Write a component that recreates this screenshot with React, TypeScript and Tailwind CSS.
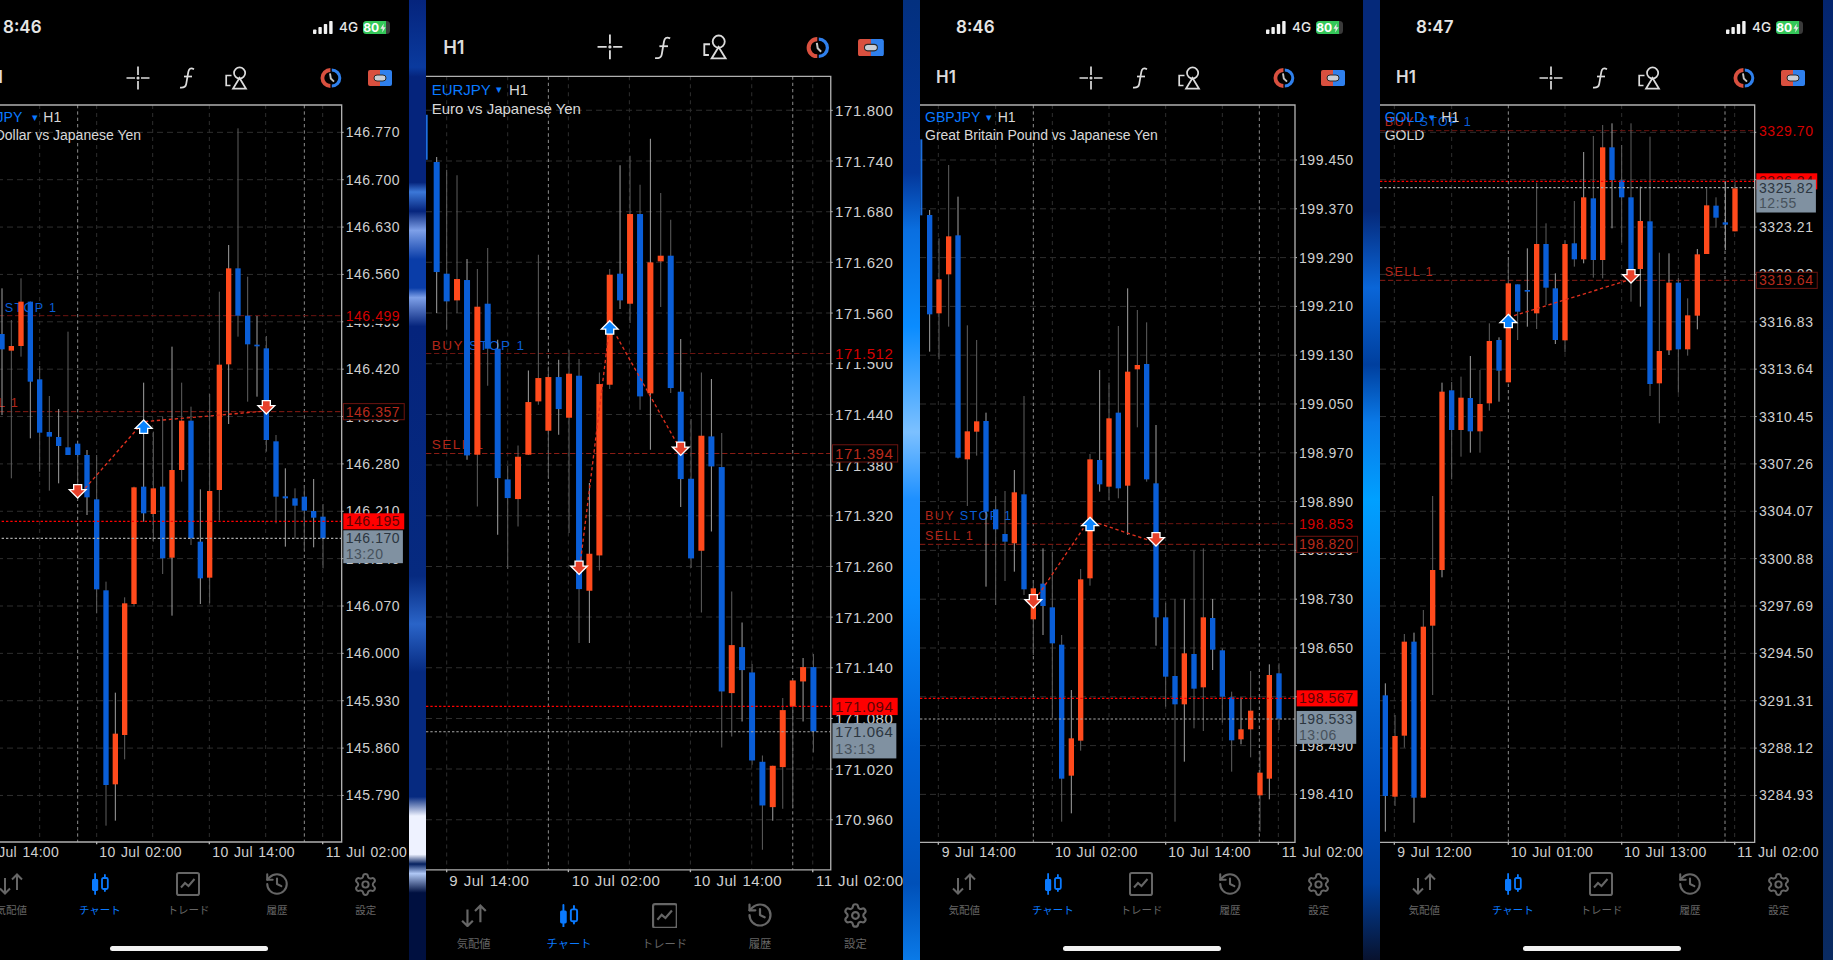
import { History, Settings } from "lucide-react"

// c = [x, wickTop, bodyTop, bodyBottom, wickBottom, colour], in units of 1/3 screen pixel
type Candle = [number, number, number, number, number, "b" | "o"]

type ChartData = {
  viewBox: string
  width: string
  font: number
  bodyWidth: number
  frame: { left: number; top: number; right: number; bottom: number }
  labelX: number
  prices: [string, number][]
  dim: number[]
  bright: number[]
  ticks: number[]
  times: [string, number][]
  timeY: number
  symbol: { x: number; y: number; name: string; arrowX: number; h1X: number; desc: string; descX: number; descY: number }
  buy: { price: string; y: number }
  sell: { price: string; y: number }
  ask: { price: string; y: number }
  bid: { price: string; time: string; y: number }
  orderLabels: { text: string; x: number; y: number; red?: string; blue?: string }[]
  path: string[]
  arrows: [number, number, "up" | "down"][]
  edge?: [number, number, number]
  candles: Candle[]
}

const ladder = (labels: string[], y0: number, step: number): [string, number][] =>
  labels.map((l, i) => [l, y0 + i * step])

const usdjpy: ChartData = {
  viewBox: "-99 -414 1329 2292",
  width: "w-[443px]",
  font: 42,
  bodyWidth: 16,
  frame: { left: -99, top: -405, right: 1025, bottom: 1806 },
  labelX: 1037,
  prices: ladder(
    ["146.770", "146.700", "146.630", "146.560", "146.490", "146.420", "146.350", "146.280", "146.210", "146.140", "146.070", "146.000", "145.930", "145.860", "145.790"],
    -323,
    142.1,
  ),
  dim: [119, 290, 458, 628, 797, 968],
  bright: [233, 913],
  ticks: [-50, 290, 628, 968],
  times: [["9 Jul 14:00", -46], ["10 Jul 02:00", 298], ["10 Jul 14:00", 637], ["11 Jul 02:00", 977]],
  timeY: 1837,
  symbol: { x: -99, y: -368, name: "USDJPY", arrowX: 105, h1X: 130, desc: "US Dollar vs Japanese Yen", descX: -86, descY: -315 },
  buy: { price: "146.499", y: 227 },
  sell: { price: "146.357", y: 515 },
  ask: { price: "146.195", y: 844 },
  bid: { price: "146.170", time: "13:20", y: 895 },
  orderLabels: [
    { text: "", x: -90, y: 203, red: "BUY ", blue: "STOP 1" },
    { text: "", x: -90, y: 490, red: "SELL 1" },
  ],
  path: ["255,745 431,545 799,513"],
  arrows: [[233, 752, "down"], [431, 562, "up"], [799, 500, "down"]],
  candles: [
    [6, 145, 282, 328, 525, "b"], [34, 240, 318, 332, 715, "o"], [63, 115, 185, 318, 350, "o"], [91, 185, 185, 425, 595, "b"],
    [119, 378, 418, 578, 695, "b"], [148, 468, 576, 590, 752, "b"], [176, 507, 591, 618, 730, "b"], [204, 275, 622, 645, 645, "b"],
    [233, 610, 611, 645, 780, "b"], [261, 630, 645, 772, 825, "b"], [290, 645, 778, 1048, 1120, "b"], [318, 1025, 1051, 1635, 1757, "b"],
    [346, 1358, 1481, 1633, 1742, "o"], [374, 1072, 1090, 1485, 1558, "o"], [402, 740, 742, 1092, 1100, "o"], [431, 428, 740, 820, 845, "b"],
    [460, 575, 745, 822, 905, "o"], [488, 530, 740, 955, 1002, "b"], [516, 320, 690, 953, 1127, "o"], [545, 428, 542, 690, 725, "o"],
    [573, 500, 542, 895, 915, "b"], [601, 748, 905, 1015, 1092, "b"], [629, 462, 753, 1013, 1090, "o"], [658, 155, 374, 750, 842, "o"],
    [686, 15, 85, 373, 552, "o"], [714, -335, 85, 227, 290, "b"], [743, 110, 227, 313, 485, "b"], [771, 228, 314, 318, 470, "b"],
    [799, 288, 325, 600, 635, "b"], [828, 585, 604, 770, 850, "b"], [856, 685, 769, 775, 920, "b"], [885, 745, 775, 797, 895, "b"],
    [913, 735, 770, 812, 930, "b"], [941, 717, 813, 833, 922, "b"], [969, 792, 830, 895, 985, "b"],
  ],
}

const eurjpy: ChartData = {
  viewBox: "18 -680 1431 2468",
  width: "w-[443px]",
  font: 45,
  bodyWidth: 18,
  frame: { left: 18, top: -670, right: 1232, bottom: 1710 },
  labelX: 1245,
  prices: ladder(
    ["171.800", "171.740", "171.680", "171.620", "171.560", "171.500", "171.440", "171.380", "171.320", "171.260", "171.200", "171.140", "171.080", "171.020", "170.960"],
    -568,
    152,
  ),
  dim: [80, 263, 445, 628, 811, 995, 1178],
  bright: [385, 1118],
  ticks: [80, 445, 811, 1178],
  times: [["9 Jul 14:00", 88], ["10 Jul 02:00", 455], ["10 Jul 14:00", 820], ["11 Jul 02:00", 1188]],
  timeY: 1742,
  symbol: { x: 35, y: -632, name: "EURJPY", arrowX: 237, h1X: 267, desc: "Euro vs Japanese Yen", descX: 35, descY: -574 },
  buy: { price: "171.512", y: 161 },
  sell: { price: "171.394", y: 461 },
  ask: { price: "171.094", y: 1220 },
  bid: { price: "171.064", time: "13:13", y: 1296 },
  orderLabels: [
    { text: "", x: 35, y: 135, red: "BUY ", blue: "STOP 1" },
    { text: "", x: 35, y: 433, red: "SELL 1" },
  ],
  path: ["482,780 565,110", "590,110 770,430"],
  arrows: [[477, 802, "down"], [569, 85, "up"], [782, 445, "down"]],
  edge: [20, -555, -420],
  candles: [
    [50, -428, -413, -83, 40, "b"], [80, -390, -78, 5, 90, "b"], [111, -373, -62, 2, 40, "o"], [141, -122, -59, 467, 480, "b"],
    [172, -92, 21, 465, 620, "o"], [203, -155, 12, 147, 258, "b"], [233, 120, 147, 535, 705, "b"], [263, 498, 539, 595, 808, "b"],
    [294, 437, 471, 598, 680, "o"], [325, 212, 307, 465, 465, "o"], [355, -135, 235, 305, 315, "o"], [385, 200, 232, 393, 533, "o"],
    [416, 180, 232, 328, 405, "b"], [447, 150, 222, 354, 700, "o"], [477, 178, 228, 868, 1030, "b"], [508, 550, 762, 873, 1030, "o"],
    [538, 218, 253, 767, 812, "o"], [569, -92, -75, 255, 268, "o"], [600, -403, -78, 2, 28, "b"], [630, -432, -257, 12, 70, "o"],
    [660, -345, -257, 290, 330, "b"], [691, -483, -112, 281, 450, "o"], [722, -320, -132, -115, 22, "o"], [752, -240, -132, 265, 280, "b"],
    [782, 118, 276, 538, 622, "b"], [813, 358, 537, 776, 805, "b"], [844, 218, 408, 753, 938, "o"], [874, 238, 410, 500, 695, "b"],
    [905, 400, 502, 1175, 1343, "b"], [935, 875, 1036, 1180, 1310, "o"], [966, 968, 1042, 1111, 1265, "b"], [996, 1093, 1118, 1382, 1395, "b"],
    [1027, 1367, 1386, 1517, 1650, "b"], [1058, 1398, 1398, 1522, 1563, "o"], [1088, 1195, 1231, 1402, 1527, "o"], [1118, 1142, 1142, 1220, 1525, "o"],
    [1149, 1075, 1102, 1145, 1265, "o"], [1180, 1063, 1102, 1295, 1358, "b"],
  ],
}

const gbpjpy: ChartData = {
  viewBox: "60 -1194 1329 2292",
  width: "w-[443px]",
  font: 42,
  bodyWidth: 16,
  frame: { left: 60, top: -1185, right: 1185, bottom: 1027 },
  labelX: 1197,
  prices: ladder(
    ["199.450", "199.370", "199.290", "199.210", "199.130", "199.050", "198.970", "198.890", "198.810", "198.730", "198.650", "198.570", "198.490", "198.410"],
    -1020,
    146.4,
  ),
  dim: [115, 287, 457, 627, 797, 967, 1135],
  bright: [400, 1078],
  ticks: [115, 457, 797, 1135],
  times: [["9 Jul 14:00", 125], ["10 Jul 02:00", 465], ["10 Jul 14:00", 805], ["11 Jul 02:00", 1145]],
  timeY: 1057,
  symbol: { x: 75, y: -1148, name: "GBPJPY", arrowX: 267, h1X: 293, desc: "Great Britain Pound vs Japanese Yen", descX: 75, descY: -1096 },
  buy: { price: "198.853", y: 71 },
  sell: { price: "198.820", y: 133 },
  ask: { price: "198.567", y: 595 },
  bid: { price: "198.533", time: "13:06", y: 657 },
  orderLabels: [
    { text: "", x: 75, y: 47, red: "BUY ", blue: "STOP 1" },
    { text: "", x: 75, y: 107, red: "SELL 1" },
  ],
  path: ["415,285 550,85", "595,70 750,122"],
  arrows: [[400, 302, "down"], [570, 74, "up"], [768, 116, "down"]],
  edge: [64, -1082, -854],
  candles: [
    [89, -870, -855, -557, -445, "b"], [117, -785, -662, -560, -422, "o"], [146, -1005, -791, -677, -520, "o"], [174, -910, -794, -127, -125, "b"],
    [202, -524, -206, -122, 18, "o"], [230, -480, -236, -205, -133, "o"], [258, -262, -237, 35, 260, "b"], [287, -12, 28, 88, 315, "b"],
    [315, -27, 102, 125, 243, "b"], [343, -90, -23, 130, 215, "o"], [372, -312, -17, 268, 285, "b"], [400, 240, 265, 358, 465, "o"],
    [429, 145, 251, 318, 405, "b"], [457, 155, 322, 430, 655, "b"], [485, 405, 434, 836, 965, "b"], [514, 570, 715, 827, 940, "o"],
    [542, 207, 238, 722, 752, "o"], [570, -138, -122, 235, 257, "o"], [599, -390, -120, -47, -25, "b"], [627, -352, -245, -40, 0, "o"],
    [655, -522, -262, -35, -5, "b"], [683, -635, -385, -43, 105, "o"], [712, -570, -405, -392, -218, "o"], [740, -533, -408, -62, -55, "b"],
    [768, -225, -50, 352, 437, "b"], [797, 308, 352, 530, 620, "b"], [825, 298, 528, 613, 965, "b"], [853, 298, 460, 613, 785, "o"],
    [882, 152, 462, 566, 685, "b"], [910, 145, 352, 562, 693, "o"], [938, 297, 354, 449, 510, "b"], [967, 445, 451, 590, 668, "b"],
    [995, 575, 592, 721, 815, "b"], [1023, 592, 688, 718, 733, "o"], [1052, 513, 632, 688, 772, "o"], [1080, 752, 818, 886, 995, "o"],
    [1108, 493, 525, 836, 898, "o"], [1137, 490, 520, 656, 690, "b"],
  ],
}

const gold: ChartData = {
  viewBox: "30 -1134 1329 2292",
  width: "w-[443px]",
  font: 42,
  bodyWidth: 16,
  frame: { left: 30, top: -1125, right: 1154, bottom: 1087 },
  labelX: 1167,
  prices: ladder(
    ["3329.59", "3326.40", "3323.21", "3320.02", "3316.83", "3313.64", "3310.45", "3307.26", "3304.07", "3300.88", "3297.69", "3294.50", "3291.31", "3288.12", "3284.93"],
    -1043,
    142.1,
  ),
  dim: [73, 245, 585, 755, 925, 1094],
  bright: [415, 1065],
  ticks: [73, 415, 755, 1094],
  times: [["9 Jul 12:00", 82], ["10 Jul 01:00", 422], ["10 Jul 13:00", 762], ["11 Jul 02:00", 1102]],
  timeY: 1117,
  symbol: { x: 44, y: -1090, name: "GOLD", arrowX: 186, h1X: 214, desc: "GOLD", descX: 44, descY: -1036 },
  buy: { price: "3329.70", y: -1048 },
  sell: { price: "3319.64", y: -599 },
  ask: { price: "3326.24", y: -896 },
  bid: { price: "3325.82", time: "12:55", y: -877 },
  orderLabels: [
    { text: "", x: 44, y: -1073, red: "BUY ", blue: "STOP 1" },
    { text: "", x: 44, y: -625, red: "SELL 1" },
  ],
  path: ["432,-493 770,-598"],
  arrows: [[415, -475, "up"], [783, -613, "down"]],
  candles: [
    [46, 610, 646, 948, 1055, "b"], [75, 705, 768, 950, 978, "o"], [103, 462, 485, 767, 803, "o"], [132, 458, 485, 953, 1028, "b"],
    [160, 390, 440, 953, 953, "o"], [188, 48, 270, 437, 645, "o"], [216, -292, -265, 270, 292, "o"], [245, -294, -269, -150, -2, "b"],
    [273, -310, -247, -150, -70, "o"], [301, -372, -246, -146, -82, "b"], [330, -330, -228, -146, -82, "o"], [358, -470, -417, -230, -208, "o"],
    [387, -428, -420, -328, -235, "b"], [415, -660, -590, -293, -293, "o"], [443, -587, -587, -505, -420, "b"], [472, -695, -570, -568, -460, "b"],
    [500, -892, -708, -500, -453, "o"], [528, -770, -708, -577, -525, "b"], [556, -620, -575, -420, -408, "b"], [585, -720, -708, -419, -383, "o"],
    [613, -837, -710, -662, -640, "b"], [641, -984, -848, -662, -650, "o"], [670, -1032, -845, -660, -607, "b"], [698, -1065, -998, -660, -605, "o"],
    [726, -1070, -998, -900, -755, "b"], [755, -1005, -899, -848, -712, "b"], [783, -1070, -848, -630, -535, "b"], [811, -880, -777, -633, -520, "o"],
    [840, -1030, -776, -288, -252, "b"], [868, -682, -387, -290, -170, "o"], [897, -680, -592, -389, -375, "o"], [925, -607, -592, -392, -262, "b"],
    [953, -545, -494, -392, -373, "o"], [982, -693, -677, -493, -452, "o"], [1010, -875, -824, -678, -678, "o"], [1038, -848, -823, -787, -757, "b"],
    [1066, -895, -773, -766, -690, "b"], [1095, -895, -875, -746, -746, "o"],
  ],
}

function Chart({ d }: { d: ChartData }) {
  const { frame, font, labelX } = d
  const spacing = font * 0.04
  const boxX = frame.right + 5
  const boxW = font * 4.35
  const boxH = font * 1.15
  return (
    <svg viewBox={d.viewBox} className="block h-[764px] w-[443px] font-['Liberation_Sans',sans-serif]">
      {d.prices.map(([, y]) => (
        <line key={y} x1={frame.left} x2={frame.right} y1={y} y2={y} stroke="#2e2e2e" strokeWidth="3" strokeDasharray="18 12" />
      ))}
      {d.dim.map((x) => (
        <line key={x} x1={x} x2={x} y1={frame.top} y2={frame.bottom} stroke="#2e2e2e" strokeWidth="3" strokeDasharray="12 12" />
      ))}
      {d.bright.map((x) => (
        <line key={x} x1={x} x2={x} y1={frame.top} y2={frame.bottom} stroke="#8c8c8c" strokeWidth="3" strokeDasharray="10 9" />
      ))}

      {/* order labels sit under the candles */}
      {d.orderLabels.map((o) => (
        <text key={o.y} x={o.x} y={o.y} fontSize={font * 0.9} letterSpacing={font * 0.1} dominantBaseline="central">
          {o.red && <tspan fill="#b3261a">{o.red}</tspan>}
          {o.blue && <tspan fill="#0a5ed7">{o.blue}</tspan>}
        </text>
      ))}
      <text x={d.symbol.x} y={d.symbol.y} fontSize={font} fill="#0a7aff" dominantBaseline="central">{d.symbol.name}</text>
      <text x={d.symbol.arrowX} y={d.symbol.y} fontSize={font * 0.75} fill="#0a7aff" textAnchor="middle" dominantBaseline="central">▾</text>
      <text x={d.symbol.h1X} y={d.symbol.y} fontSize={font} fill="#d8d8d8" dominantBaseline="central">H1</text>
      <text x={d.symbol.descX} y={d.symbol.descY} fontSize={font} fill="#d8d8d8" dominantBaseline="central">{d.symbol.desc}</text>

      <line x1={frame.left} x2={frame.right} y1={d.buy.y} y2={d.buy.y} stroke="#6b1410" strokeWidth="3" strokeDasharray="16 8" />
      <line x1={frame.left} x2={frame.right} y1={d.sell.y} y2={d.sell.y} stroke="#8a1c14" strokeWidth="3" strokeDasharray="16 8" />

      {d.edge && <line x1={d.edge[0]} x2={d.edge[0]} y1={d.edge[1]} y2={d.edge[2]} stroke="#1d6fe0" strokeWidth="6" />}
      {d.candles.map(([x, wt, bt, bb, wb, c], i) => (
        <g key={x}>
          <line x1={x} x2={x} y1={wt} y2={wb} stroke={i % 3 === 0 ? "#a0a0a0" : "#5f5f5f"} strokeWidth="3" />
          <rect x={x - d.bodyWidth / 2} y={bt} width={d.bodyWidth} height={Math.max(bb - bt, 5)} fill={c === "b" ? "#0a5ed7" : "#ff4a1c"} />
        </g>
      ))}

      {d.path.map((p) => (
        <polyline key={p} points={p} fill="none" stroke="#e0301e" strokeWidth="4" strokeDasharray="10 8" />
      ))}
      {d.arrows.map(([x, y, dir]) => (
        <polygon
          key={x}
          transform={`translate(${x} ${y}) ${dir === "down" ? "scale(1 -1)" : ""}`}
          points="0,-22 25,3 12,3 12,18 -12,18 -12,3 -25,3"
          fill={dir === "up" ? "#0a84ff" : "#e8402a"}
          stroke="#ffffff"
          strokeWidth="4"
        />
      ))}

      <line x1={frame.left} x2={frame.right} y1={d.ask.y} y2={d.ask.y} stroke="#ff0000" strokeWidth="3.5" strokeDasharray="7 6" />
      <line x1={frame.left} x2={frame.right} y1={d.bid.y} y2={d.bid.y} stroke="#a8a8a8" strokeWidth="3.5" strokeDasharray="7 6" />

      <path
        d={`M${frame.left} ${frame.top}H${frame.right}V${frame.bottom}H${frame.left}`}
        fill="none"
        stroke="#b0b0b0"
        strokeWidth="4"
      />
      {d.prices.map(([, y]) => (
        <line key={y} x1={frame.right} x2={frame.right + 6} y1={y} y2={y} stroke="#b0b0b0" strokeWidth="3" />
      ))}
      {d.ticks.map((x) => (
        <line key={x} x1={x} x2={x} y1={frame.bottom} y2={frame.bottom + 7} stroke="#b0b0b0" strokeWidth="4" />
      ))}

      {d.prices.map(([l, y]) => (
        <text key={l} x={labelX} y={y} fontSize={font} letterSpacing={spacing} fill="#cfcfcf" dominantBaseline="central">{l}</text>
      ))}
      {d.times.map(([l, x]) => (
        <text key={l} x={x} y={d.timeY} fontSize={font} letterSpacing={spacing * 0.6} wordSpacing={font * 0.08} fill="#cfcfcf" dominantBaseline="central">{l}</text>
      ))}

      <rect x={boxX} y={d.buy.y - boxH / 2} width={boxW} height={boxH} fill="#000" />
      <text x={labelX} y={d.buy.y} fontSize={font} letterSpacing={spacing} fill="#d40000" dominantBaseline="central">{d.buy.price}</text>

      <rect x={boxX} y={d.sell.y - boxH / 2} width={boxW} height={boxH} fill="#000" stroke="#6b1410" strokeWidth="3" />
      <text x={labelX} y={d.sell.y} fontSize={font} letterSpacing={spacing} fill="#b82a1c" dominantBaseline="central">{d.sell.price}</text>

      <rect x={boxX} y={d.ask.y - boxH / 2} width={boxW} height={boxH} fill="#ff0000" />
      <text x={labelX} y={d.ask.y} fontSize={font} letterSpacing={spacing} fill="#5a0505" dominantBaseline="central">{d.ask.price}</text>

      <rect x={boxX} y={d.bid.y - boxH / 2} width={boxW - 4} height={font * 2.35} fill="#8091a1" />
      <text x={labelX} y={d.bid.y} fontSize={font} letterSpacing={spacing} fill="#2c3640" dominantBaseline="central">{d.bid.price}</text>
      <text x={labelX} y={d.bid.y + font * 1.12} fontSize={font} letterSpacing={spacing} fill="#47525c" dominantBaseline="central">{d.bid.time}</text>
    </svg>
  )
}

function StatusBar({ time }: { time: string }) {
  return (
    <div className="flex h-[54px] items-center pt-[1px] pr-[20px] pl-[36px] text-[#e6e6e6]">
      <span className="font-['Inter',sans-serif] text-[17px] font-semibold">{time}</span>
      <div className="ml-auto flex items-center">
        <svg viewBox="0 0 20 13" className="h-[13px] w-[20px]" fill="#f2f2f2">
          <rect x="0" y="8.5" width="3.4" height="4.5" rx="0.8" />
          <rect x="5.4" y="6" width="3.4" height="7" rx="0.8" />
          <rect x="10.8" y="3" width="3.4" height="10" rx="0.8" />
          <rect x="16.2" y="0" width="3.4" height="13" rx="0.8" />
        </svg>
        <span className="ml-[6px] font-['Inter',sans-serif] text-[13.5px] leading-none font-medium">4G</span>
        <div className="ml-[5px] flex h-[13px] w-[27px] items-center overflow-hidden rounded-[3.5px] bg-[#3a3a3a]">
          <div className="flex h-full w-[23px] items-center justify-center bg-[#34c759] font-['Inter',sans-serif] text-[12px] leading-none font-bold text-white">
            80
            <svg viewBox="0 0 8 12" className="ml-[0.5px] h-[10px] w-[6px]" fill="#e6e6e6">
              <path d="M5 0 0.5 7H3.5L3 12 7.5 5H4.5Z" />
            </svg>
          </div>
        </div>
      </div>
    </div>
  )
}

function Toolbar() {
  return (
    <div className="flex h-[48px] items-center pl-[16px] text-[#dcdcdc]">
      <span className="w-[130.5px] font-['Inter',sans-serif] text-[17px] font-semibold">H1</span>
      <div className="flex w-[49px] justify-center">
        <svg viewBox="0 0 24 24" className="h-[24px] w-[24px]" fill="none" stroke="#dcdcdc" strokeWidth="1.7">
          <path d="M0.5 12H9M15 12H23.5M12 0.5V9M12 15V23.5" />
          <circle cx="12" cy="12" r="0.7" fill="#dcdcdc" />
        </svg>
      </div>
      <div className="flex w-[49px] justify-center">
        <svg viewBox="0 0 16 22" className="h-[22px] w-[16px]" fill="none" stroke="#dcdcdc" strokeWidth="1.7">
          <path d="M15 2.2C11.5 0.4 9.8 2 9.3 5L7.2 17C6.7 20 5 21 1 20.6" />
          <path d="M5 9.5H13" />
        </svg>
      </div>
      <div className="flex w-[49px] justify-center">
        <svg viewBox="0 0 23 24" className="h-[24px] w-[23px]" fill="none" stroke="#dcdcdc" strokeWidth="1.7">
          <circle cx="14.6" cy="7" r="5.6" />
          <path d="M14.5 12L8 22.7H21Z" />
          <path d="M6.5 9.5H1.2V19.5H5.5" />
        </svg>
      </div>
      <div className="w-[46px]" />
      <div className="flex w-[49px] justify-center">
        <svg viewBox="0 0 24 20" className="h-[20px] w-[24px]" fill="none">
          <path d="M11.4 2A8 8 0 0 0 11.4 18" stroke="#d9503f" strokeWidth="3.8" />
          <path d="M12.8 2A8 8 0 0 1 12.8 18" stroke="#2f80ed" strokeWidth="3" />
          <path d="M11 5.4L11.8 10.5L15 13.6" stroke="#c4c4c4" strokeWidth="1.9" />
        </svg>
      </div>
      <div className="flex w-[49px] justify-center">
        <svg viewBox="0 0 24 16" className="h-[16px] w-[24px]">
          <path d="M2 0H12V16H2A2 2 0 0 1 0 14V2A2 2 0 0 1 2 0Z" fill="#d9503f" />
          <path d="M12 0H22A2 2 0 0 1 24 2V14A2 2 0 0 1 22 16H12Z" fill="#2f80ed" />
          <rect x="6" y="5" width="12" height="6" rx="3" fill="#c9ced6" stroke="#2a2a2a" strokeWidth="1" />
        </svg>
      </div>
    </div>
  )
}

function TabItem({ label, active, children }: { label: string; active?: boolean; children: React.ReactNode }) {
  return (
    <div className={active ? "flex flex-col items-center text-[#0a7aff]" : "flex flex-col items-center text-[#666666]"}>
      <div className="flex h-[26px] items-center justify-center">{children}</div>
      <span className="mt-[6px] font-['Noto_Sans_CJK_JP',sans-serif] text-[10.5px] leading-[14px]">{label}</span>
    </div>
  )
}

function TabBar() {
  return (
    <div className="grid grid-cols-5 pt-[5px]">
      <TabItem label="気配値">
        <svg viewBox="0 0 24 22" className="h-[22px] w-[24px]" fill="none" stroke="currentColor" strokeWidth="2">
          <path d="M6 5V20.5M1 15.5L6 20.5L11 15.5" />
          <path d="M18 1.5V17M13 6.5L18 1.5L23 6.5" />
        </svg>
      </TabItem>
      <TabItem label="チャート" active>
        <svg viewBox="0 0 18 22" className="h-[22px] w-[18px]" fill="currentColor">
          <rect x="3.2" y="0" width="1.8" height="22" rx="0.9" />
          <rect x="1" y="6" width="6.2" height="12" rx="1.4" />
          <rect x="13" y="1" width="1.8" height="18" rx="0.9" />
          <rect x="11" y="5" width="5.8" height="11" rx="1.4" fill="#000" stroke="currentColor" strokeWidth="1.8" />
        </svg>
      </TabItem>
      <TabItem label="トレード">
        <svg viewBox="0 0 24 24" className="h-[24px] w-[24px]" fill="none" stroke="currentColor" strokeWidth="2">
          <rect x="1" y="1" width="22" height="22" rx="1.8" />
          <path d="M5 15.5L9 11L12.5 14L18.5 7" />
        </svg>
      </TabItem>
      <TabItem label="履歴">
        <History className="h-[26px] w-[26px]" strokeWidth={1.9} />
      </TabItem>
      <TabItem label="設定">
        <Settings className="h-[25px] w-[25px]" strokeWidth={1.9} />
      </TabItem>
    </div>
  )
}

function Phone({ time, data }: { time: string; data: ChartData }) {
  return (
    <div className="flex w-[443px] flex-col">
      <StatusBar time={time} />
      <Toolbar />
      <Chart d={data} />
      <TabBar />
      <div className="mt-[29px] flex justify-center">
        <div className="h-[5px] w-[158px] rounded-full bg-[#f2f2f2]" />
      </div>
    </div>
  )
}

export default function App() {
  return (
    <div className="flex h-[960px] w-[1833px] overflow-hidden bg-black">
      <div className="w-[409px] shrink-0 overflow-hidden">
        <div className="-ml-[33px]">
          <Phone time="8:46" data={usdjpy} />
        </div>
      </div>
      <div className="w-[17px] shrink-0 bg-[linear-gradient(to_bottom,#05247c_0%,#0a3a9e_7%,#05247c_8%,#05247c_19%,#3c78d8_20%,#05247c_22%,#7ea0e8_24%,#0a3da8_27%,#0a3da8_30%,#7ea0e8_31%,#05247c_34%,#062a80_60%,#2a64c8_65%,#062a80_70%,#062a80_83%,#eef2ff_85%,#eef2ff_89%,#05205f_90%,#b0c8f5_91%,#001040_93%,#001040_100%)]" />
      <div className="w-[477px] shrink-0 overflow-hidden">
        <div className="-mt-[34px] [zoom:1.077]">
          <Phone time="8:46" data={eurjpy} />
        </div>
      </div>
      <div className="w-[17px] shrink-0 bg-[linear-gradient(to_bottom,#03307f_0%,#04379a_18%,#0a6fe0_24%,#0a8cff_34%,#7cc0ff_45%,#1e90ff_52%,#0a8cff_62%,#0062d6_78%,#0050b8_92%,#0a7ae8_100%)]" />
      <div className="w-[443px] shrink-0 overflow-hidden">
        <Phone time="8:46" data={gbpjpy} />
      </div>
      <div className="w-[17px] shrink-0 bg-[linear-gradient(to_bottom,#05297a_0%,#05297a_22%,#0a66d8_30%,#003f9e_38%,#0a7ae8_44%,#00a0ff_52%,#0a7ae8_65%,#0050c0_83%,#00409e_92%,#08122e_100%)]" />
      <div className="w-[443px] shrink-0 overflow-hidden">
        <Phone time="8:47" data={gold} />
      </div>
      <div className="flex-1 bg-[linear-gradient(to_bottom,#04256e_0%,#05307f_30%,#0a3a8f_55%,#062a6e_80%,#0a2a60_100%)]" />
    </div>
  )
}
